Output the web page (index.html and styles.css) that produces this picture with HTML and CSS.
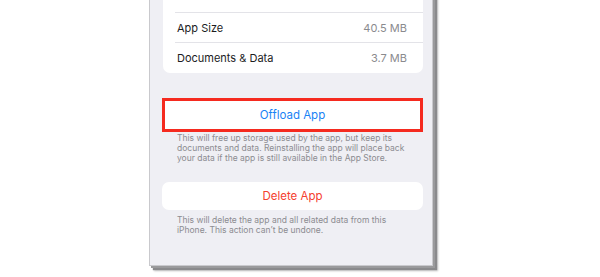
FILE: index.html
```html
<!DOCTYPE html>
<html>
<head>
<meta charset="utf-8">
<link rel="stylesheet" href="styles.css">
</head>
<body>
<div class="frame">
  <div class="card info">
    <div class="row"></div>
    <div class="row"><span class="label">App Size</span><span class="value">40.5 MB</span></div>
    <div class="row"><span class="label">Documents &amp; Data</span><span class="value">3.7 MB</span></div>
  </div>
  <div class="btn offload">Offload App</div>
  <p class="note">This will free up storage used by the app, but keep its documents and data. Reinstalling the app will place back your data if the app is still available in the App Store.</p>
  <div class="btn delete">Delete App</div>
  <p class="note">This will delete the app and all related data from this iPhone. This action can’t be undone.</p>
</div>
</body>
</html>
```

FILE: styles.css
```css
html, body {
  margin: 0;
  padding: 0;
  background: #ffffff;
}
body {
  font-family: Inter, "Noto Sans", "Liberation Sans", sans-serif;
  overflow: hidden;
  height: 277px;
}
.frame {
  margin: -18px 0 0 149px;
  width: 284px;
  height: 284px;
  box-sizing: border-box;
  border: 1px solid #c9c9cd;
  background: #efeff4;
  padding: 0 9px 0 12px;
  box-shadow: 2px 2px 0 #9a9a9c, 4px 4px 1px #8a8a8c, 5px 5px 2px rgba(0,0,0,0.25);
}
.card {
  background: #fff;
  border-radius: 7px;
  margin-left: 1px;
}
.row {
  height: 30px;
  margin-left: 12px;
  padding: 0 16px 0 2px;
  display: flex;
  align-items: center;
  justify-content: space-between;
  border-bottom: 1px solid #e3e3e8;
  font-size: 11px;
  color: #1c1c1e;
  box-sizing: border-box;
}
.row:last-child {
  border-bottom: none;
}
.value {
  color: #8a8a8e;
}
.btn {
  display: flex;
  align-items: center;
  justify-content: center;
  background: #fff;
  font-size: 11.5px;
  box-sizing: border-box;
}
.offload {
  margin-top: 25px;
  height: 34px;
  border: 3px solid #f52a1f;
  color: #1a82f5;
}
.delete {
  margin-top: 19px;
  height: 28px;
  border-radius: 7px;
  color: #f5402f;
}
.note {
  margin: 1px 0 0 0;
  padding: 0 14px 0 15px;
  font-size: 8.5px;
  line-height: 10px;
  color: #8c8c91;
}
.delete + .note {
  margin-top: 5px;
}
```
